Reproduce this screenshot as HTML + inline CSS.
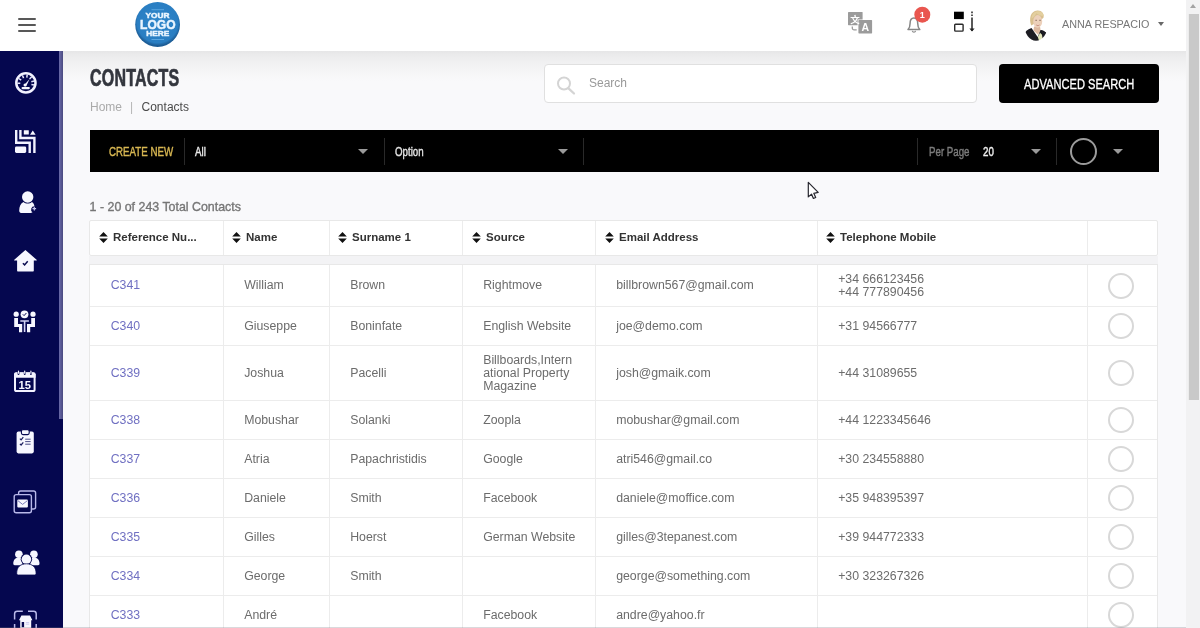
<!DOCTYPE html>
<html lang="en">
<head>
<meta charset="utf-8">
<title>Contacts</title>
<style>
*{box-sizing:border-box;margin:0;padding:0}
html,body{width:1200px;height:628px;overflow:hidden}html{background:#f9f9fb}body{will-change:transform}
body{position:relative;background:#f9f9fb;font-family:"Liberation Sans",sans-serif;font-size:12px;color:#666}
.abs{position:absolute}
/* header */
#hdr{position:absolute;left:0;top:0;width:1187px;height:51px;background:#fff;z-index:5}
#shade{position:absolute;left:63px;top:51px;width:1124px;height:30px;background:linear-gradient(#e6e6e7,#ebebec 14%,#f0f0f1 36%,#f5f5f6 66%,#f9f9fb);z-index:0}
#burger{position:absolute;left:18px;top:17.8px;width:17.5px;height:15px}
#burger i{display:block;height:2.6px;background:#585858;margin-bottom:3.4px;border-radius:1px}
#logo{position:absolute;left:135px;top:2px;width:45px;height:45px}
#uname{position:absolute;left:1062px;top:18px;font-size:10.8px;color:#777;white-space:nowrap;letter-spacing:0}
/* sidebar */
#side{position:absolute;left:0;top:51px;width:59px;height:577px;background:#05074f;z-index:4}
#sthumb{position:absolute;left:59px;top:51px;width:4px;height:368px;background:linear-gradient(90deg,#6a6aa9,#4a4a80);z-index:4}
#strack{position:absolute;left:59px;top:419px;width:4px;height:209px;background:#05074f;z-index:4}
/* scrollbar */
#sb{position:absolute;left:1186px;top:0;width:14px;height:628px;background:#f2f2f3;z-index:9}
#sb .th{position:absolute;left:2px;top:14px;width:11px;height:386px;background:#c9c9c9}
#sb .up{position:absolute;left:4px;top:4px;width:0;height:0;border-left:3.5px solid transparent;border-right:3.5px solid transparent;border-bottom:4px solid #a3a3a3}
/* title */
#title{position:absolute;left:90px;top:65px;font-size:23px;font-weight:bold;color:#33363e;transform-origin:0 50%;transform:scaleX(.695);white-space:nowrap;letter-spacing:.3px;-webkit-text-stroke:.7px #33363e}
#crumb{position:absolute;left:90px;top:99.5px;font-size:12px;color:#aaa;white-space:nowrap}
#crumb b{font-weight:normal;color:#4a4a4a}
#crumb span{margin:0 8.4px 0 8px;color:#b5b5b5}
/* search */
#search{position:absolute;left:544px;top:64px;width:433px;height:39px;background:#fff;border:1px solid #e0e0e0;border-radius:4px}
#search span{position:absolute;left:44px;top:11px;font-size:12px;color:#999}
#adv{position:absolute;left:999px;top:64px;width:160px;height:39px;background:#000;border-radius:4px;color:#fff}
#adv span{position:absolute;left:25px;top:12px;font-size:14px;white-space:nowrap;transform-origin:0 50%;transform:scaleX(.794);-webkit-text-stroke:.3px #fff}
/* toolbar */
#tb{position:absolute;left:90px;top:130px;width:1069px;height:42px;background:#000}
#tb .sep{position:absolute;top:8px;width:1px;height:27px;background:#292929}
#tb .car{position:absolute;width:0;height:0;border-left:5px solid transparent;border-right:5px solid transparent;border-top:5px solid #9a9a9a}
#tb .t{position:absolute;top:13.5px;font-size:13.5px;white-space:nowrap;transform-origin:0 50%;transform:scaleX(.72);-webkit-text-stroke:.45px currentColor}
/* count */
#count{position:absolute;left:89.6px;top:199.5px;font-size:12.4px;color:#777;-webkit-text-stroke:.35px #747474;white-space:nowrap}
/* table */
#thead{position:absolute;left:89px;top:220px;width:1069px;height:36px;background:#fff;border:1px solid #e8e8e8;border-radius:2px}
#gap{position:absolute;left:89px;top:256px;width:1069px;height:9px;background:#f3f3f5}
.th{position:absolute;top:0;height:34px;border-left:1px solid #ececec;font-weight:bold;color:#333;font-size:11.5px;line-height:33px;white-space:nowrap}
.th svg{position:absolute;left:9px;top:11px}
.th span{position:absolute;left:23px;top:0}
#tbody{position:absolute;left:89px;top:264px;width:1069px;height:364px;background:#fff;border:1px solid #e8e8e8;border-bottom:0;overflow:hidden}
table{border-collapse:collapse;table-layout:fixed;width:1068px}
td{border-bottom:1px solid #ececec;border-left:1px solid #ececec;padding:2px 0 0 20.7px;font-size:12.3px;color:#6c6c6c;vertical-align:middle;line-height:13.2px}
td:first-child{border-left:0;color:#7070c2}
.r1 td{padding-top:.6px}
td i{display:block;width:26px;height:26px;border:2px solid #d8d8d8;border-radius:50%;margin-left:0;position:relative;top:-.5px}
</style>
</head>
<body>
<div id="hdr">
  <div id="burger"><i></i><i></i><i></i></div>
  <svg id="logo" viewBox="0 0 45 45">
    <defs><radialGradient id="lg" cx="50%" cy="45%" r="52%"><stop offset="0" stop-color="#2e86cb"/><stop offset=".88" stop-color="#2a7ec2"/><stop offset="1" stop-color="#1d5d96"/></radialGradient></defs>
    <circle cx="22.6" cy="22.5" r="22.4" fill="url(#lg)"/>
    <rect x="16.5" y="7.2" width="12.5" height="1" fill="#5aa6e0"/>
    <rect x="16.5" y="37" width="12.5" height="1" fill="#5aa6e0"/>
    <g font-family="Liberation Sans, sans-serif" font-weight="bold" fill="#eaf5ff" stroke="#eaf5ff" stroke-width=".45" text-anchor="middle">
      <text x="22.5" y="16.3" font-size="7.7" textLength="24" lengthAdjust="spacingAndGlyphs">YOUR</text>
      <text x="22.8" y="26.8" font-size="12" textLength="35.5" lengthAdjust="spacingAndGlyphs">LOGO</text>
      <text x="22.8" y="34.3" font-size="7.7" textLength="23" lengthAdjust="spacingAndGlyphs">HERE</text>
    </g>
  </svg>

  <svg class="abs" style="left:840px;top:5px" width="150" height="40" viewBox="840 5 150 40">
    <!-- translate -->
    <rect x="848" y="12" width="14.6" height="13.2" rx=".6" fill="#9b9b9b"/>
    <path d="M852.3 26.5v1.6a1.8 1.8 0 0 0 1.8 1.8h2.6" fill="none" stroke="#9b9b9b" stroke-width="1.3"/>
    <rect x="857.6" y="19.4" width="15" height="14.4" rx=".6" fill="#fff"/>
    <rect x="858.4" y="20.1" width="13.7" height="13.3" rx=".6" fill="#9b9b9b"/>
    <text x="855.1" y="22.6" font-family="Liberation Sans, 'Noto Sans CJK SC', sans-serif" font-size="9.5" font-weight="bold" fill="#fff" text-anchor="middle">文</text>
    <text x="865.3" y="31.3" font-family="Liberation Sans, sans-serif" font-size="10.5" font-weight="bold" fill="#fff" text-anchor="middle">A</text>
    <!-- bell -->
    <path d="M908 29.6c1.6-1.5 2.1-3.4 2.1-6.3 0-3.4 1.5-5.4 3.8-5.4s3.8 2 3.8 5.400c0 2.900 .5 4.800 2.100 6.300z" fill="none" stroke="#868686" stroke-width="1.5" stroke-linejoin="round"/>
    <path d="M912.300 30.800a1.700 1.700 0 0 0 3.300 0" fill="none" stroke="#8c8c8c" stroke-width="1.2"/>
    <circle cx="922.3" cy="14.7" r="8" fill="#e9564f"/>
    <text x="922.3" y="18" font-family="Liberation Sans, sans-serif" font-size="9" font-weight="bold" fill="#fff" text-anchor="middle">1</text>
    <!-- sort -->
    <rect x="954" y="11.7" width="9.8" height="7.4" fill="#000"/>
    <rect x="954.7" y="24.3" width="8.4" height="6.800" rx=".8" fill="none" stroke="#2a2a2a" stroke-width="1.4"/>
    <path d="M972 17.5V31" stroke="#222" stroke-width="1.5" fill="none"/>
    <path d="M972 11.500v1.700M972 14.400v1.700" stroke="#222" stroke-width="1.5" fill="none"/>
    <path d="M969.4 28.600l2.600 3 2.600-3z" fill="#222"/>
  </svg>
  <svg class="abs" style="left:1022px;top:8px" width="30" height="34" viewBox="1022 8 30 34">
    <defs><clipPath id="av"><ellipse cx="1036" cy="24.600" rx="11.800" ry="16.200"/></clipPath><filter id="bl" x="-10%" y="-10%" width="120%" height="120%"><feGaussianBlur stdDeviation=".6"/></filter></defs>
    <g clip-path="url(#av)" filter="url(#bl)">
      <path d="M1031.200 25.500c-2.400-6.500-1-14.300 6.100-15 4.600-.3 6.600 2.800 6.300 7l-2.600 2.500z" fill="#d9c08f"/>
      <path d="M1034 26.500h6l.8 5-3 3-4.300-4z" fill="#dcb9a0"/>
      <ellipse cx="1037.700" cy="21.400" rx="4.500" ry="6.300" fill="#ecd0ba"/>
      <path d="M1031.500 18.500c.5-5.600 4.300-8 8.600-7 2.400.7 3.500 2.300 3.700 4.400-2.800 0-5.800-1-7.600-2.600-.8 2.200-2.400 4-4.700 5.200z" fill="#e3cf9f"/>
      <path d="M1035.300 20.300h1.700M1039.200 20.300h1.700" stroke="#8a6f60" stroke-width=".9"/>
      <path d="M1036.300 25c.9.800 2.300.8 3.200 0" stroke="#c08478" stroke-width=".9" fill="none"/>
      <path d="M1023.500 36c1.200-4.200 4-6.800 8-8l6.200 9 2.800-7c4 .8 6.600 3 7.800 6.600-2.600 3.700-7.200 5.500-12.500 5.500s-9.500-2.200-12.300-6.100z" fill="#1a1a20"/>
      <path d="M1037.800 37l2.200-4.200 2 2 1 6.400-3.600.8z" fill="#e3e6bb"/>
      <path d="M1040.600 30l2 4.600 .9 7 5-5c-1.300-3.600-3.800-5.800-7.900-6.600z" fill="#1a1a20"/>
    </g>
  </svg>
  <div class="abs" style="left:1158px;top:22px;width:0;height:0;border-left:3.7px solid transparent;border-right:3.7px solid transparent;border-top:4.2px solid #686868"></div>
  <div id="uname">ANNA RESPACIO</div>
</div>
<div id="shade"></div>
<div id="side"><svg width="59" height="577" viewBox="0 51 59 577" style="position:absolute;left:0;top:0">
<g fill="#f7f7ff" stroke="none">
<!-- 1 gauge -->
<circle cx="25.9" cy="82.9" r="9.600" fill="none" stroke="#f2f2ff" stroke-width="2.500"/>
<path d="M20.3 83.2L17.3 83.2M21.2 80.2L18.7 78.5M23.6 78.1L22.4 75.3M26.8 77.7L27.2 74.7M29.6 79.0L31.7 76.8M31.3 81.8L34.2 81.0M31.4 84.4L34.3 85.0" stroke="#e4e4fa" stroke-width="1.5" fill="none"/>
<path d="M23.900 85.200l2.100 1.300 3.700-7.600z" fill="#f2f2ff"/><circle cx="25" cy="85" r="1.500"/>
<rect x="21.500" y="86.900" width="8.400" height="2.300" rx="1.100"/>
<!-- 2 layout -->
<path d="M16.200 130v12.700h13.500V153" fill="none" stroke="#f2f2ff" stroke-width="2.400"/>
<path d="M20.400 130v8h14V153" fill="none" stroke="#f2f2ff" stroke-width="2.400"/>
<rect x="23.800" y="130.200" width="5" height="4.400" rx=".4"/>
<path d="M30 134.800l2.800-4.400 2.800 4.400z"/>
<rect x="15" y="146.400" width="11.200" height="6.600" rx="1.400"/>
<!-- 3 person -->
<circle cx="27.700" cy="197" r="5.700"/>
<path d="M19.200 210.800c0-4.400 1.500-7.400 4.300-8.800 1.100 1 2.600 1.500 4.200 1.500s3.100-.5 4.200-1.500c1.500.9 2.400 2.300 2.500 4.300a3.300 3.300 0 0 0-1.900 6c-.9.600-2 .8-3.300.8h-7c-2 0-3-.8-3-2.300z"/>
<path d="M34.300 206.800v3.600M32.500 208.600h3.600" stroke="#c9c9f0" stroke-width="1.200"/>
<!-- 4 house -->
<path d="M25.400 250l11.200 9.700a.5.500 0 0 1-.3.900h-2.500v10.200a.7.700 0 0 1-.7.700H17.800a.7.700 0 0 1-.7-.7v-10.200h-2.500a.5.500 0 0 1-.3-.9z"/>
<path d="M22.900 263.200l1.700 1.700 3.100-3.700" fill="none" stroke="#0a0c52" stroke-width="1.500"/>
<!-- 5 meeting -->
<circle cx="16.200" cy="314.200" r="2.600"/><circle cx="33" cy="314.200" r="2.600"/>
<circle cx="24.500" cy="314.300" r="3.900"/>
<path d="M22.800 314.300l1.300 1.300 2.300-2.600" fill="none" stroke="#0a0c52" stroke-width="1"/>
<path d="M14.200 318h3.800v6h4.200v8.200h-3.200v-5.200h-4.800z"/>
<path d="M35 318h-3.800v6h-4.200v8.200h3.200v-5.200h4.800z"/>
<path d="M20.300 320.300h8.600v1.400h-3.500v10.400h-1.600v-10.400h-3.500z" fill="#d4d4f4"/>
<!-- 6 calendar -->
<path d="M16 372.200h17.600a2 2 0 0 1 2 2v3.600H14v-3.600a2 2 0 0 1 2-2z"/>
<rect x="15" y="373.500" width="19.600" height="17.600" rx="1.600" fill="none" stroke="#f2f2ff" stroke-width="2"/>
<g fill="#05074f"><rect x="17.600" y="370.800" width="1.800" height="4.200" rx=".9"/><rect x="23.800" y="370.800" width="1.800" height="4.200" rx=".9"/><rect x="30" y="370.800" width="1.800" height="4.200" rx=".9"/></g>
<g fill="#f2f2ff"><rect x="17.900" y="370.400" width="1.200" height="3.400" rx=".6"/><rect x="24.100" y="370.400" width="1.200" height="3.400" rx=".6"/><rect x="30.300" y="370.400" width="1.200" height="3.400" rx=".6"/></g>
<text x="24.700" y="388.800" font-family="Liberation Sans, sans-serif" font-weight="bold" font-size="11.200" text-anchor="middle" fill="#f6f6ff">15</text>
<!-- 7 clipboard -->
<rect x="16.600" y="431.600" width="17.200" height="21.800" rx="1.800"/>
<rect x="21.400" y="429.600" width="7.800" height="5" rx="1.600" stroke="#05074f" stroke-width="1.100"/>
<path d="M19.900 438.600l1.200 1.200 2.200-2.600M19.900 443.800l1.200 1.200 2.200-2.600" fill="none" stroke="#1a1c5e" stroke-width="1.200"/>
<path d="M25.200 439.200h5.400M25.200 441.600h5.400M25.200 444.200h5.400" stroke="#4a4c86" stroke-width="1"/>
<!-- 8 mail copies -->
<path d="M18.600 494v-1a2 2 0 0 1 2-2h13a2 2 0 0 1 2 2v14a2 2 0 0 1-2 2h-2" fill="none" stroke="#b9b9ea" stroke-width="1.400"/>
<rect x="14.200" y="494.600" width="17.200" height="18.200" rx="2" fill="none" stroke="#b9b9ea" stroke-width="1.400"/>
<rect x="17.300" y="499.600" width="10.600" height="8" rx="1"/>
<path d="M17.800 500.600l4.800 3.800 4.800-3.800" fill="none" stroke="#6a6cb0" stroke-width=".9"/>
<!-- 9 group -->
<circle cx="18.900" cy="554.300" r="3.800"/><circle cx="33.900" cy="554.300" r="3.800"/>
<path d="M13.300 563.600c0-3.800 2-6.200 5.400-6.200 1.700 0 3 .5 3.900 1.400v6.400h-7.900c-.9 0-1.400-.6-1.400-1.600z"/>
<path d="M39.500 563.600c0-3.800-2-6.200-5.400-6.200-1.700 0-3 .5-3.900 1.400v6.400h7.900c.9 0 1.400-.6 1.400-1.600z"/>
<circle cx="26.400" cy="559.300" r="5.700" fill="#05074f"/>
<circle cx="26.400" cy="559.300" r="4.800"/>
<path d="M16.700 573.200c0-6 3.600-9.400 9.700-9.400s9.700 3.400 9.700 9.400c0 1.100-.7 1.800-1.800 1.800h-15.800c-1.100 0-1.800-.7-1.800-1.800z" stroke="#05074f" stroke-width=".8"/>
<!-- 10 frame house -->
<path d="M14.600 619.400v-5.600a2.600 2.600 0 0 1 2.600-2.600h5.600M28 611.200h5.600a2.600 2.600 0 0 1 2.600 2.600v5.600M14.600 624v5M36.200 624v5" fill="none" stroke="#b9b9ea" stroke-width="1.500"/>
<path d="M21.400 615.400h8.600l2.400 4.800h-1.200v8h-11v-8h-1.200z"/>
<rect x="21.700" y="622" width="2.400" height="5.200" fill="#05074f"/>
<path d="M25.800 622.600h3.400M25.800 624.200h3.400" stroke="#b9b9ea" stroke-width=".7"/>
</g>
</svg></div>
<div id="sthumb"></div><div id="strack"></div>
<div class="abs" style="left:0;top:627px;width:1187px;height:1px;background:rgba(120,120,130,.28);z-index:8"></div>
<div id="sb"><div class="up"></div><div class="th"></div></div>

<div id="title">CONTACTS</div>
<div id="crumb">Home<span>|</span><b>Contacts</b></div>
<div id="search"><svg class="abs" style="left:9px;top:9px" width="24" height="24" viewBox="553 73 24 24"><circle cx="563" cy="82.5" r="6" fill="none" stroke="#d4d4d4" stroke-width="2"/><path d="M567.5 87.300l5.500 5.200" stroke="#d4d4d4" stroke-width="2.300" stroke-linecap="round"/></svg><span>Search</span></div>
<div id="adv"><span>ADVANCED SEARCH</span></div>

<div id="tb">
  <div class="t" style="left:19px;color:#d8b752">CREATE NEW</div>
  <div class="sep" style="left:94px"></div>
  <div class="t" style="left:105px;color:#e8e8e8">All</div>
  <div class="car" style="left:268px;top:19px"></div>
  <div class="sep" style="left:294px"></div>
  <div class="t" style="left:305px;color:#e0e0e0">Option</div>
  <div class="car" style="left:468px;top:19px"></div>
  <div class="sep" style="left:493px"></div>
  <div class="sep" style="left:827px"></div>
  <div class="t" style="left:839px;color:#7c7c7c">Per Page</div>
  <div class="t" style="left:893px;color:#f0f0f0">20</div>
  <div class="car" style="left:941px;top:19px"></div>
  <div class="sep" style="left:966px"></div>
  <div class="abs" style="left:980px;top:8px;width:27px;height:27px;border:2px solid #9c9c9c;border-radius:50%"></div>
  <div class="car" style="left:1023px;top:19px"></div>
</div>

<svg class="abs" style="left:805px;top:180px;z-index:8" width="18" height="24" viewBox="805 180 18 24"><path d="M808.300 182.400v14.500l3.200-2.800 1.900 4.400 2.300-1-1.900-4.200 4.400-.9z" fill="#fff" stroke="#26262e" stroke-width="1.200" stroke-linejoin="round"/></svg>
<div id="count">1 - 20 of 243 Total Contacts</div>

<div id="thead">
  <div class="th" style="left:0;width:133px;border-left:0"><svg width="9" height="11" viewBox="0 0 9 11"><path d="M4.500 0l4.300 4.600h-8.600zM4.500 11l4.300-4.600h-8.600z" fill="#111"/></svg><span>Reference Nu...</span></div>
  <div class="th" style="left:133px;width:106px"><svg style="left:8px" width="9" height="11" viewBox="0 0 9 11"><path d="M4.500 0l4.300 4.600h-8.600zM4.500 11l4.300-4.600h-8.600z" fill="#111"/></svg><span style="left:22px">Name</span></div>
  <div class="th" style="left:239px;width:133px"><svg style="left:8px" width="9" height="11" viewBox="0 0 9 11"><path d="M4.500 0l4.300 4.600h-8.600zM4.500 11l4.300-4.600h-8.600z" fill="#111"/></svg><span style="left:22px">Surname 1</span></div>
  <div class="th" style="left:372px;width:133px"><svg width="9" height="11" viewBox="0 0 9 11"><path d="M4.500 0l4.300 4.600h-8.600zM4.500 11l4.300-4.600h-8.600z" fill="#111"/></svg><span>Source</span></div>
  <div class="th" style="left:505px;width:222px"><svg width="9" height="11" viewBox="0 0 9 11"><path d="M4.500 0l4.300 4.600h-8.600zM4.500 11l4.300-4.600h-8.600z" fill="#111"/></svg><span>Email Address</span></div>
  <div class="th" style="left:727px;width:270px"><svg style="left:8px" width="9" height="11" viewBox="0 0 9 11"><path d="M4.500 0l4.300 4.600h-8.600zM4.500 11l4.300-4.600h-8.600z" fill="#111"/></svg><span style="left:22px">Telephone Mobile</span></div>
  <div class="th" style="left:997px;width:70px"></div>
</div>
<div id="gap"></div>
<div id="tbody">
<table>
<colgroup><col style="width:133px"><col style="width:106px"><col style="width:133px"><col style="width:133px"><col style="width:222px"><col style="width:270px"><col style="width:71px"></colgroup>
<tr style="height:41px" class="r1"><td>C341</td><td>William</td><td>Brown</td><td>Rightmove</td><td>billbrown567@gmail.com</td><td style="padding-top:2px">+34 666123456<br>+44 777890456</td><td><i style="top:.5px"></i></td></tr>
<tr style="height:39px"><td>C340</td><td>Giuseppe</td><td>Boninfate</td><td>English Website</td><td>joe@demo.com</td><td>+31 94566777</td><td><i></i></td></tr>
<tr style="height:55px"><td>C339</td><td>Joshua</td><td>Pacelli</td><td>Billboards,Intern<br>ational Property<br>Magazine</td><td>josh@gmaik.com</td><td>+44 31089655</td><td><i></i></td></tr>
<tr style="height:39px"><td>C338</td><td>Mobushar</td><td>Solanki</td><td>Zoopla</td><td>mobushar@gmail.com</td><td>+44 1223345646</td><td><i></i></td></tr>
<tr style="height:39px"><td>C337</td><td>Atria</td><td>Papachristidis</td><td>Google</td><td>atri546@gmail.co</td><td>+30 234558880</td><td><i></i></td></tr>
<tr style="height:39px"><td>C336</td><td>Daniele</td><td>Smith</td><td>Facebook</td><td>daniele@moffice.com</td><td>+35 948395397</td><td><i></i></td></tr>
<tr style="height:39px"><td>C335</td><td>Gilles</td><td>Hoerst</td><td>German Website</td><td>gilles@3tepanest.com</td><td>+39 944772333</td><td><i></i></td></tr>
<tr style="height:39px"><td>C334</td><td>George</td><td>Smith</td><td></td><td>george@something.com</td><td>+30 323267326</td><td><i></i></td></tr>
<tr style="height:39px"><td>C333</td><td>André</td><td></td><td>Facebook</td><td>andre@yahoo.fr</td><td></td><td><i></i></td></tr>
</table>
</div>
</body>
</html>
